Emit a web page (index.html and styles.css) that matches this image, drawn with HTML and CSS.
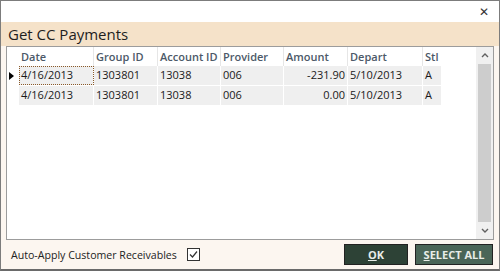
FILE: index.html
```html
<!DOCTYPE html>
<html>
<head>
<meta charset="utf-8">
<link rel="stylesheet" href="styles.css">
</head>
<body>
<div class="window">
  <div class="titlebar"><span class="close">✕</span></div>
  <div class="header">Get CC Payments</div>
  <div class="body">
    <div class="grid">
      <div class="table">
        <div class="row head">
          <div class="ind"></div>
          <div class="c c1">Date</div>
          <div class="c c2">Group ID</div>
          <div class="c c3">Account ID</div>
          <div class="c c4">Provider</div>
          <div class="c c5">Amount</div>
          <div class="c c6">Depart</div>
          <div class="c c7">Stl</div>
        </div>
        <div class="row data">
          <div class="ind"><span class="tri"></span></div>
          <div class="c c1 focus">4/16/2013</div>
          <div class="c c2">1303801</div>
          <div class="c c3">13038</div>
          <div class="c c4">006</div>
          <div class="c c5 num">-231.90</div>
          <div class="c c6">5/10/2013</div>
          <div class="c c7">A</div>
        </div>
        <div class="row data">
          <div class="ind"></div>
          <div class="c c1">4/16/2013</div>
          <div class="c c2">1303801</div>
          <div class="c c3">13038</div>
          <div class="c c4">006</div>
          <div class="c c5 num">0.00</div>
          <div class="c c6">5/10/2013</div>
          <div class="c c7">A</div>
        </div>
      </div>
      <div class="scrollbar">
        <div class="arrow up"><svg width="8" height="5" viewBox="0 0 8 5"><path d="M1 4 L4 1 L7 4" fill="none" stroke="#606060" stroke-width="1.4"/></svg></div>
        <div class="thumb"></div>
        <div class="arrow down"><svg width="8" height="5" viewBox="0 0 8 5"><path d="M1 1 L4 4 L7 1" fill="none" stroke="#606060" stroke-width="1.4"/></svg></div>
      </div>
    </div>
    <div class="footer">
      <span class="label">Auto-Apply Customer Receivables</span>
      <span class="check"><svg width="11" height="11" viewBox="0 0 11 11"><path d="M2 5.5 L4.5 8 L9 2.5" fill="none" stroke="#333" stroke-width="1.2"/></svg></span>
      <div class="buttons">
        <button class="btn ok"><u>O</u>K</button>
        <button class="btn all"><u>S</u>ELECT ALL</button>
      </div>
    </div>
  </div>
</div>
</body>
</html>
```
FILE: styles.css
```css
* { box-sizing: border-box; }
html, body { margin: 0; padding: 0; }
body {
  width: 500px;
  height: 271px;
  font-family: "Open Sans", "Noto Sans", "Liberation Sans", sans-serif;
  font-size: 11px;
  color: #1a1a1a;
}
.window {
  width: 500px;
  height: 271px;
  border: 1px solid #7c7c7c;
  border-bottom: 2px solid #6a6a6a;
  display: flex;
  flex-direction: column;
  background: #fcf6f0;
}
.titlebar {
  height: 21px;
  background: #ffffff;
  display: flex;
  justify-content: flex-end;
  align-items: center;
  padding-right: 10px;
}
.close {
  font-size: 12px;
  color: #333;
  font-family: "DejaVu Sans", sans-serif;
  line-height: 1;
}
.header {
  height: 24px;
  background: #f5e2c9;
  font-size: 15px;
  line-height: 24px;
  padding-left: 7px;
  color: #1e1e1e;
}
.body {
  flex: 1;
  display: flex;
  flex-direction: column;
  padding: 0 5px 0 5px;
}
.grid {
  height: 194px;
  border: 1px solid #9c9c9c;
  background: #ffffff;
  display: flex;
}
.table {
  flex: 1;
  display: flex;
  flex-direction: column;
}
.row {
  display: flex;
  height: 19px;
  align-items: stretch;
}
.row.data { margin-bottom: 1px; }
.ind {
  width: 12px;
  position: relative;
  display: flex;
  align-items: center;
  padding-left: 2px;
}
.tri {
  width: 0; height: 0;
  border-top: 4px solid transparent;
  border-bottom: 4px solid transparent;
  border-left: 5px solid #000;
}
.c {
  padding: 0 2px;
  line-height: 18px;
  white-space: nowrap;
  overflow: hidden;
}
.c1 { width: 75px; }
.c2 { width: 64px; }
.c3 { width: 63px; }
.c4 { width: 63px; }
.c5 { width: 64px; }
.c6 { width: 75px; }
.c7 { width: 18px; }
.head .c {
  font-weight: 600;
  color: #4c5968;
  border-right: 1px solid #e6e6e6;
  line-height: 19px;
}
.head .c7 { border-right: none; }
.data .c {
  background: #efefef;
  border-right: 1px solid #ffffff;
}
.data .c7 { border-right: none; }
.num { text-align: right; }
.focus { outline: 1px dotted #8a5a2a; outline-offset: -1px; }
.scrollbar {
  width: 17px;
  background: #f0f0f0;
  display: flex;
  flex-direction: column;
  align-items: center;
}
.arrow {
  height: 17px;
  width: 17px;
  display: flex;
  align-items: center;
  justify-content: center;
}
.thumb {
  flex: 1;
  width: 13px;
  background: #cdcdcd;
}
.footer {
  flex: 1;
  display: flex;
  align-items: center;
}
.label {
  padding-left: 5px;
  font-size: 10.6px;
  color: #222;
}
.check {
  margin-left: 10px;
  width: 13px;
  height: 13px;
  border: 1px solid #333;
  display: flex;
  align-items: center;
  justify-content: center;
  background: #fff;
}
.buttons {
  margin-left: auto;
  display: flex;
  gap: 7px;
  padding-right: 1px;
}
.btn {
  height: 21px;
  border: 1px solid #222;
  color: #e8ede8;
  font-family: "Open Sans", "Noto Sans", sans-serif;
  font-weight: 700;
  font-size: 11px;
  padding: 0;
}
.ok { width: 64px; background: #2d4236; }
.all { width: 78px; background: #4a6557; }
```
